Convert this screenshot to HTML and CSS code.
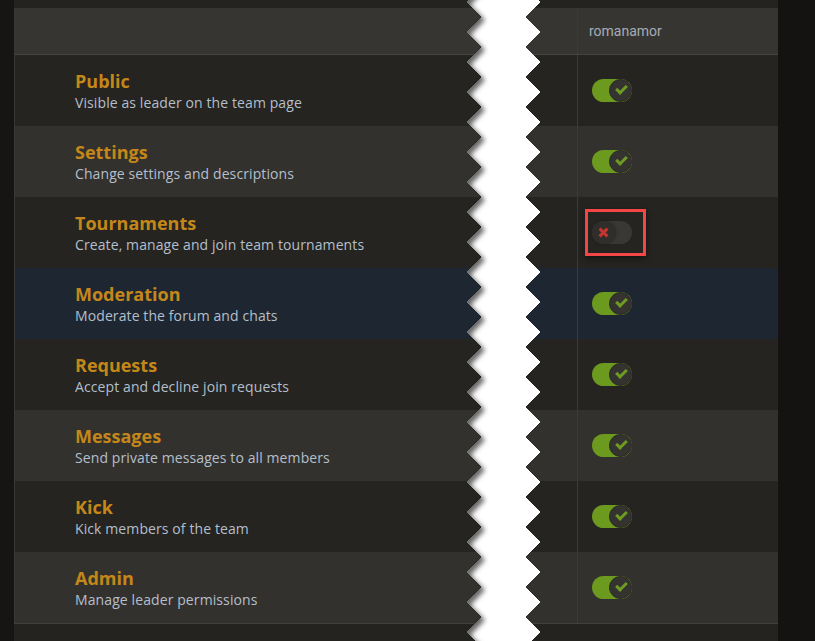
FILE: index.html
```html
<!DOCTYPE html>
<html>
  <head>
    <meta charset="UTF-8">
    <title>Leader permissions</title>
    <link rel="stylesheet" href="styles.css">
  </head>
  <body>

    <div class="frame">
      <div class="gutter"></div>

      <div class="panel">
        <div class="perm-table">

          <div class="row head">
            <div class="cell name"></div>
            <div class="cell member">romanamor</div>
          </div>

          <div class="row">
            <div class="cell name">
              <div class="perm-title">Public</div>
              <div class="perm-desc">Visible as leader on the team page</div>
            </div>
            <div class="cell member"><span class="switch on"><span class="knob"></span></span></div>
          </div>

          <div class="row alt">
            <div class="cell name">
              <div class="perm-title">Settings</div>
              <div class="perm-desc">Change settings and descriptions</div>
            </div>
            <div class="cell member"><span class="switch on"><span class="knob"></span></span></div>
          </div>

          <div class="row">
            <div class="cell name">
              <div class="perm-title">Tournaments</div>
              <div class="perm-desc">Create, manage and join team tournaments</div>
            </div>
            <div class="cell member">
              <span class="switch off marked"><span class="knob"></span></span>
            </div>
          </div>

          <div class="row hover">
            <div class="cell name">
              <div class="perm-title">Moderation</div>
              <div class="perm-desc">Moderate the forum and chats</div>
            </div>
            <div class="cell member"><span class="switch on"><span class="knob"></span></span></div>
          </div>

          <div class="row">
            <div class="cell name">
              <div class="perm-title">Requests</div>
              <div class="perm-desc">Accept and decline join requests</div>
            </div>
            <div class="cell member"><span class="switch on"><span class="knob"></span></span></div>
          </div>

          <div class="row alt">
            <div class="cell name">
              <div class="perm-title">Messages</div>
              <div class="perm-desc">Send private messages to all members</div>
            </div>
            <div class="cell member"><span class="switch on"><span class="knob"></span></span></div>
          </div>

          <div class="row">
            <div class="cell name">
              <div class="perm-title">Kick</div>
              <div class="perm-desc">Kick members of the team</div>
            </div>
            <div class="cell member"><span class="switch on"><span class="knob"></span></span></div>
          </div>

          <div class="row alt last">
            <div class="cell name">
              <div class="perm-title">Admin</div>
              <div class="perm-desc">Manage leader permissions</div>
            </div>
            <div class="cell member"><span class="switch on"><span class="knob"></span></span></div>
          </div>

        </div>
      </div>

      <div class="edge"></div>
    </div>

    <!-- torn paper cut over the middle of the table -->
    <svg class="tear" width="815" height="641" viewBox="0 0 815 641">
      <defs>
        <clipPath id="paper-clip">
          <polygon points="6.5,0 80,0 65,15 80,30 6.5,30 21,15"/>
        </clipPath>
        <filter id="soft" x="-50%" y="-50%" width="200%" height="200%">
          <feGaussianBlur stdDeviation="2.5"/>
        </filter>
        <pattern id="tear-tile" x="460" y="2" width="85" height="30" patternUnits="userSpaceOnUse">
          <polygon points="6.5,0 80,0 65,15 80,30 6.5,30 21,15" fill="#fff" shape-rendering="crispEdges"/>
          <g clip-path="url(#paper-clip)">
            <polygon filter="url(#soft)" fill="rgba(0,0,0,0.6)" transform="translate(4,3)"
              points="-20,-30 6.5,-30 21,-15 6.5,0 21,15 6.5,30 21,45 6.5,60 -20,60"/>
          </g>
        </pattern>
      </defs>
      <rect x="460" y="0" width="85" height="641" fill="url(#tear-tile)"/>
    </svg>

  </body>
</html>
```

FILE: styles.css
```css
html, body {
  margin: 0;
  padding: 0;
}

body {
  background-color: #141312;
  font-family: "Open Sans", "Noto Sans", sans-serif;
  width: 815px;
  height: 641px;
  overflow: hidden;
  position: relative;
}

.frame {
  display: flex;
  height: 641px;
}

.gutter {
  width: 14px;
  background-color: #161513;
}

.panel {
  width: 764px;
  padding-top: 8px;
  background-color: #242320;
}

.edge {
  flex: auto;
  background-color: #141312;
}

.perm-table {
  border-left: 1px solid #3a3835;
  border-bottom: 1px solid #42403c;
}

.row {
  display: flex;
  height: 71px;
  background-color: #252420;
}

.row.alt {
  background-color: #33312d;
}

.row.hover {
  background-color: #1e2731;
}

.row.head {
  height: 46px;
  background-color: #373531;
  border-bottom: 1px solid #46443f;
}

.cell {
  display: flex;
  align-items: center;
}

.cell.name {
  width: 562px;
  padding: 1px 0 0 60px;
  box-sizing: border-box;
  flex-direction: column;
  align-items: flex-start;
  justify-content: center;
}

.cell.member {
  flex: auto;
  border-left: 1px solid #3d3b37;
  padding-left: 14px;
}

.head .cell.member {
  padding-left: 11px;
  font-family: Roboto, "Liberation Sans", sans-serif;
  font-size: 14px;
  color: #a4adb6;
}

.perm-title {
  font-size: 18px;
  font-weight: bold;
  line-height: 22px;
  color: #c4871a;
}

.perm-desc {
  font-size: 14px;
  line-height: 21px;
  letter-spacing: 0.1px;
  color: #b3bfcc;
}

/* toggle switch */
.switch {
  position: relative;
  display: block;
  width: 40px;
  height: 23px;
  border-radius: 12px;
}

.switch.on {
  background-color: #6b9a1e;
}

.switch.off {
  background-color: #3a3834;
}

.knob {
  position: absolute;
  top: 0;
  width: 23px;
  height: 23px;
  box-sizing: border-box;
  border-radius: 50%;
}

.switch.on .knob {
  right: 0;
  background-color: #353330;
  border: 1px solid #2a2926;
}

.switch.on .knob::after {
  content: "";
  position: absolute;
  left: 6px;
  top: 5px;
  width: 8px;
  height: 4px;
  border-left: 3px solid #6d9c20;
  border-bottom: 3px solid #6d9c20;
  transform: rotate(-45deg);
}

.switch.off .knob {
  left: 0;
  background-color: #302e2b;
  box-shadow: 1px 0 3px rgba(0, 0, 0, 0.3);
}

.switch.off .knob::before,
.switch.off .knob::after {
  content: "";
  position: absolute;
  left: 6px;
  top: 10px;
  width: 11px;
  height: 3px;
  background-color: #c5352f;
  transform: rotate(45deg);
}

.switch.off .knob::after {
  transform: rotate(-45deg);
}

.switch.marked::after {
  content: "";
  position: absolute;
  left: -7px;
  top: -12px;
  width: 61px;
  height: 47px;
  box-sizing: border-box;
  border: 3px solid #f44646;
  box-shadow: 0 2px 6px rgba(0, 0, 0, 0.5);
}

.tear {
  position: absolute;
  left: 0;
  top: 0;
  pointer-events: none;
}
```
